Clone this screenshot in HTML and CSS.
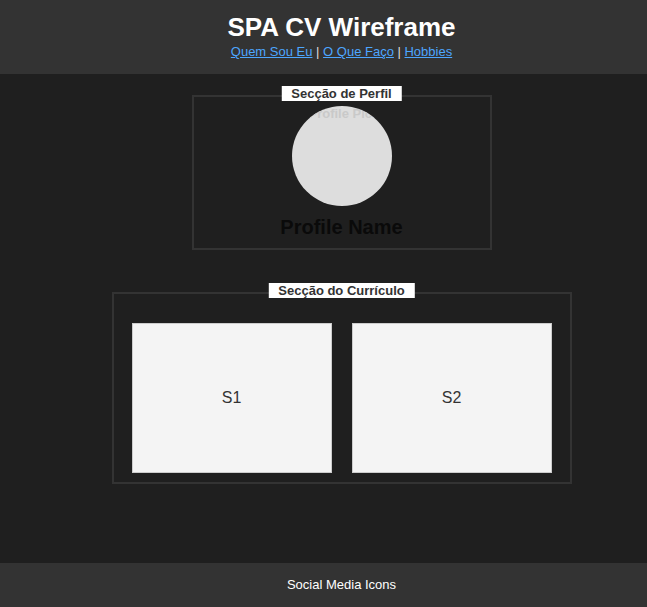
FILE: index.html
```html
<!DOCTYPE html>
<html lang="pt">
<head>
<meta charset="utf-8">
<title>SPA CV Wireframe</title>
<link rel="stylesheet" href="styles.css">
</head>
<body>
<div class="page">
  <header class="header">
    <h1 class="title">SPA CV Wireframe</h1>
    <nav class="nav">
      <a href="#perfil">Quem Sou Eu</a> | <a href="#faco">O Que Faço</a> | <a href="#hobbies">Hobbies</a>
    </nav>
  </header>
  <main class="main">
    <section class="box profile">
      <span class="legend">Secção de Perfil</span>
      <div class="avatar"><span class="avatar-alt">Profile Picture</span></div>
      <h2 class="name">Profile Name</h2>
    </section>
    <section class="box cv">
      <span class="legend">Secção do Currículo</span>
      <div class="cards">
        <div class="card">S1</div>
        <div class="card">S2</div>
      </div>
    </section>
  </main>
  <footer class="footer">Social Media Icons</footer>
</div>
</body>
</html>
```

FILE: styles.css
```css
html, body {
  margin: 0;
  padding: 0;
  overflow: hidden;
  background: #1f1f1f;
  font-family: "Liberation Sans", Arial, sans-serif;
}

.page {
  min-height: 100vh;
  display: flex;
  flex-direction: column;
}

.header {
  background: #333333;
  height: 74px;
  box-sizing: border-box;
  padding: 12px 0 0 36px;
  text-align: center;
  color: #dddddd;
}

.title {
  margin: 0;
  font-size: 26px;
  line-height: 30px;
  font-weight: bold;
  color: #ffffff;
}

.nav {
  margin-top: 2px;
  font-size: 13px;
  line-height: 16px;
}

.nav a {
  color: #4da6ff;
  text-decoration: underline;
}

.main {
  flex: 1;
  display: flex;
  flex-direction: column;
  align-items: center;
  padding: 21px 0 0 36px;
}

.box {
  position: relative;
  border: 2px solid #333333;
  box-sizing: border-box;
}

.legend {
  position: absolute;
  top: -11px;
  left: 50%;
  transform: translateX(-50%);
  background: #ffffff;
  color: #333333;
  font-size: 13px;
  font-weight: bold;
  line-height: 15px;
  padding: 0 10px;
  white-space: nowrap;
}

.profile {
  width: 300px;
  height: 155px;
  display: flex;
  flex-direction: column;
  align-items: center;
  padding-top: 9px;
}

.avatar {
  width: 100px;
  height: 100px;
  border-radius: 50%;
  background: #dddddd;
  overflow: hidden;
}

.avatar-alt {
  display: block;
  padding-left: 17px;
  font-size: 13px;
  line-height: 15px;
  font-weight: bold;
  color: #c9c9c9;
  white-space: nowrap;
}

.name {
  margin: 9px 0 0;
  font-size: 20px;
  line-height: 24px;
  font-weight: bold;
  color: #0a0a0a;
}

.cv {
  width: 460px;
  margin-top: 42px;
  padding: 29px 0 9px;
}

.cards {
  display: flex;
  justify-content: center;
  gap: 20px;
}

.card {
  width: 200px;
  height: 150px;
  box-sizing: border-box;
  background: #f4f4f4;
  border: 1px solid #cccccc;
  display: flex;
  align-items: center;
  justify-content: center;
  font-size: 16px;
  color: #333333;
}

.footer {
  background: #333333;
  height: 44px;
  line-height: 44px;
  box-sizing: border-box;
  padding-left: 36px;
  text-align: center;
  font-size: 13px;
  color: #ffffff;
}
```
